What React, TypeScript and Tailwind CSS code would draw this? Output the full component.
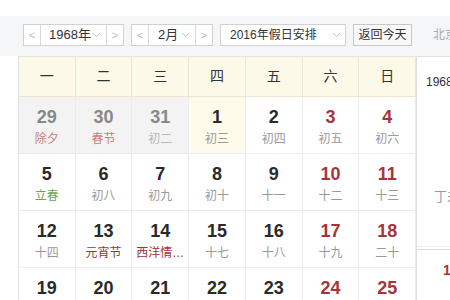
import React from "react";

type Day = { n: number; l: string; prev?: boolean; today?: boolean; red?: boolean; lc?: string };

const rows: Day[][] = [
  [
    { n: 29, l: "除夕", prev: true, lc: "text-[#c98080]" },
    { n: 30, l: "春节", prev: true, lc: "text-[#c98080]" },
    { n: 31, l: "初二", prev: true, lc: "text-[#b5b5b5]" },
    { n: 1, l: "初三", today: true },
    { n: 2, l: "初四" },
    { n: 3, l: "初五", red: true },
    { n: 4, l: "初六", red: true },
  ],
  [
    { n: 5, l: "立春", lc: "text-[#6aa84f]" },
    { n: 6, l: "初八" },
    { n: 7, l: "初九" },
    { n: 8, l: "初十" },
    { n: 9, l: "十一" },
    { n: 10, l: "十二", red: true },
    { n: 11, l: "十三", red: true },
  ],
  [
    { n: 12, l: "十四" },
    { n: 13, l: "元宵节", lc: "text-[#a0333a]" },
    { n: 14, l: "西洋情…", lc: "text-[#a0333a]" },
    { n: 15, l: "十七" },
    { n: 16, l: "十八" },
    { n: 17, l: "十九", red: true },
    { n: 18, l: "二十", red: true },
  ],
  [
    { n: 19, l: "廿一" },
    { n: 20, l: "廿二" },
    { n: 21, l: "廿三" },
    { n: 22, l: "廿四" },
    { n: 23, l: "廿五" },
    { n: 24, l: "廿六", red: true },
    { n: 25, l: "廿七", red: true },
  ],
];

const week = ["一", "二", "三", "四", "五", "六", "日"];

function Arrow({ dir }: { dir: "l" | "r" }) {
  return (
    <span className="flex h-full w-[16px] shrink-0 items-center justify-center text-[11px] text-[#bbb]">
      {dir === "l" ? "<" : ">"}
    </span>
  );
}

function Caret() {
  return (
    <svg width="9" height="6" viewBox="0 0 9 6" className="shrink-0">
      <path d="M1 1l3.5 3.5L8 1" fill="none" stroke="#c4c4c4" strokeWidth="1" />
    </svg>
  );
}

function Stepper({ label, w, pl }: { label: string; w: string; pl: string }) {
  return (
    <div className={`flex h-[22px] shrink-0 items-center border border-[#d0d0d0] bg-white ${w}`}>
      <Arrow dir="l" />
      <div className={`flex h-full min-w-0 flex-1 items-center justify-between border-x border-[#d8d8d8] pr-[5px] ${pl}`}>
        <span className="whitespace-nowrap text-[13px] text-[#333]">{label}</span>
        <Caret />
      </div>
      <Arrow dir="r" />
    </div>
  );
}

export default function App() {
  return (
    <div className="h-[300px] w-[450px] overflow-hidden bg-white font-['Liberation_Sans','Noto_Sans_CJK_SC',sans-serif]">
      <div className="h-[16px]" />
      <div className="flex h-[40px] items-center gap-[7px] bg-[#f5f6f8] pl-[23px] pb-[2px]">
        <Stepper label="1968年" w="w-[101px]" pl="pl-[8px]" />
        <Stepper label="2月" w="w-[82px]" pl="pl-[9px]" />
        <div className="flex h-[22px] w-[126px] shrink-0 items-center justify-between border border-[#d0d0d0] bg-white pl-[9px] pr-[4px]">
          <span className="whitespace-nowrap text-[12px] text-[#333]">2016年假日安排</span>
          <Caret />
        </div>
        <div className="flex h-[22px] w-[59px] shrink-0 items-center justify-center whitespace-nowrap border border-[#c8c8c8] bg-[#f9f9f9] text-[12px] text-[#333]">
          返回今天
        </div>
        <span className="ml-[14px] shrink-0 whitespace-nowrap text-[12px] text-[#aaa]">北京时间</span>
      </div>
      <div className="flex">
        <div className="ml-[18px] w-[398px] shrink-0 border-l border-t border-[#e3e3e3]">
          <div className="grid h-[40px] grid-cols-7 bg-[#fdf9e9]">
            {week.map((w) => (
              <div key={w} className="flex items-center justify-center border-r border-b border-[#ece6d0] text-[14px] text-[#333]">
                {w}
              </div>
            ))}
          </div>
          {rows.map((r, i) => (
            <div key={i} className="grid h-[57px] grid-cols-7">
              {r.map((d) => (
                <div
                  key={d.n}
                  className={`flex flex-col items-center border-r border-b border-[#ebebeb] pt-[10px] ${
                    d.prev ? "bg-[#f3f3f3]" : d.today ? "bg-[#fffbea]" : "bg-white"
                  }`}
                >
                  <span
                    className={`text-[18px] font-bold leading-[21px] ${
                      d.prev ? "text-[#888]" : d.red ? "text-[#a8343b]" : "text-[#2a2a2a]"
                    }`}
                  >
                    {d.n}
                  </span>
                  <span className={`mt-[3px] whitespace-nowrap text-[12px] leading-[17px] ${d.lc ?? "text-[#999]"}`}>
                    {d.l}
                  </span>
                </div>
              ))}
            </div>
          ))}
        </div>
        <div className="flex w-[34px] shrink-0 flex-col overflow-hidden border-l border-t border-[#e0e0e0] bg-white">
          <div className="h-[189px] whitespace-nowrap pl-[9px] pt-[16px] text-[12px] text-[#333]">
            1968年2月1日
            <div className="mt-[96px] pl-[8px] text-[13px] text-[#999]">丁未年</div>
          </div>
          <div className="h-[3px] border-t border-[#ececec]" />
          <div className="border-t border-[#dcdcdc] pl-[26px] pt-[10px] text-[14px] font-bold text-[#a8343b]">
            1968
          </div>
        </div>
      </div>
    </div>
  );
}
